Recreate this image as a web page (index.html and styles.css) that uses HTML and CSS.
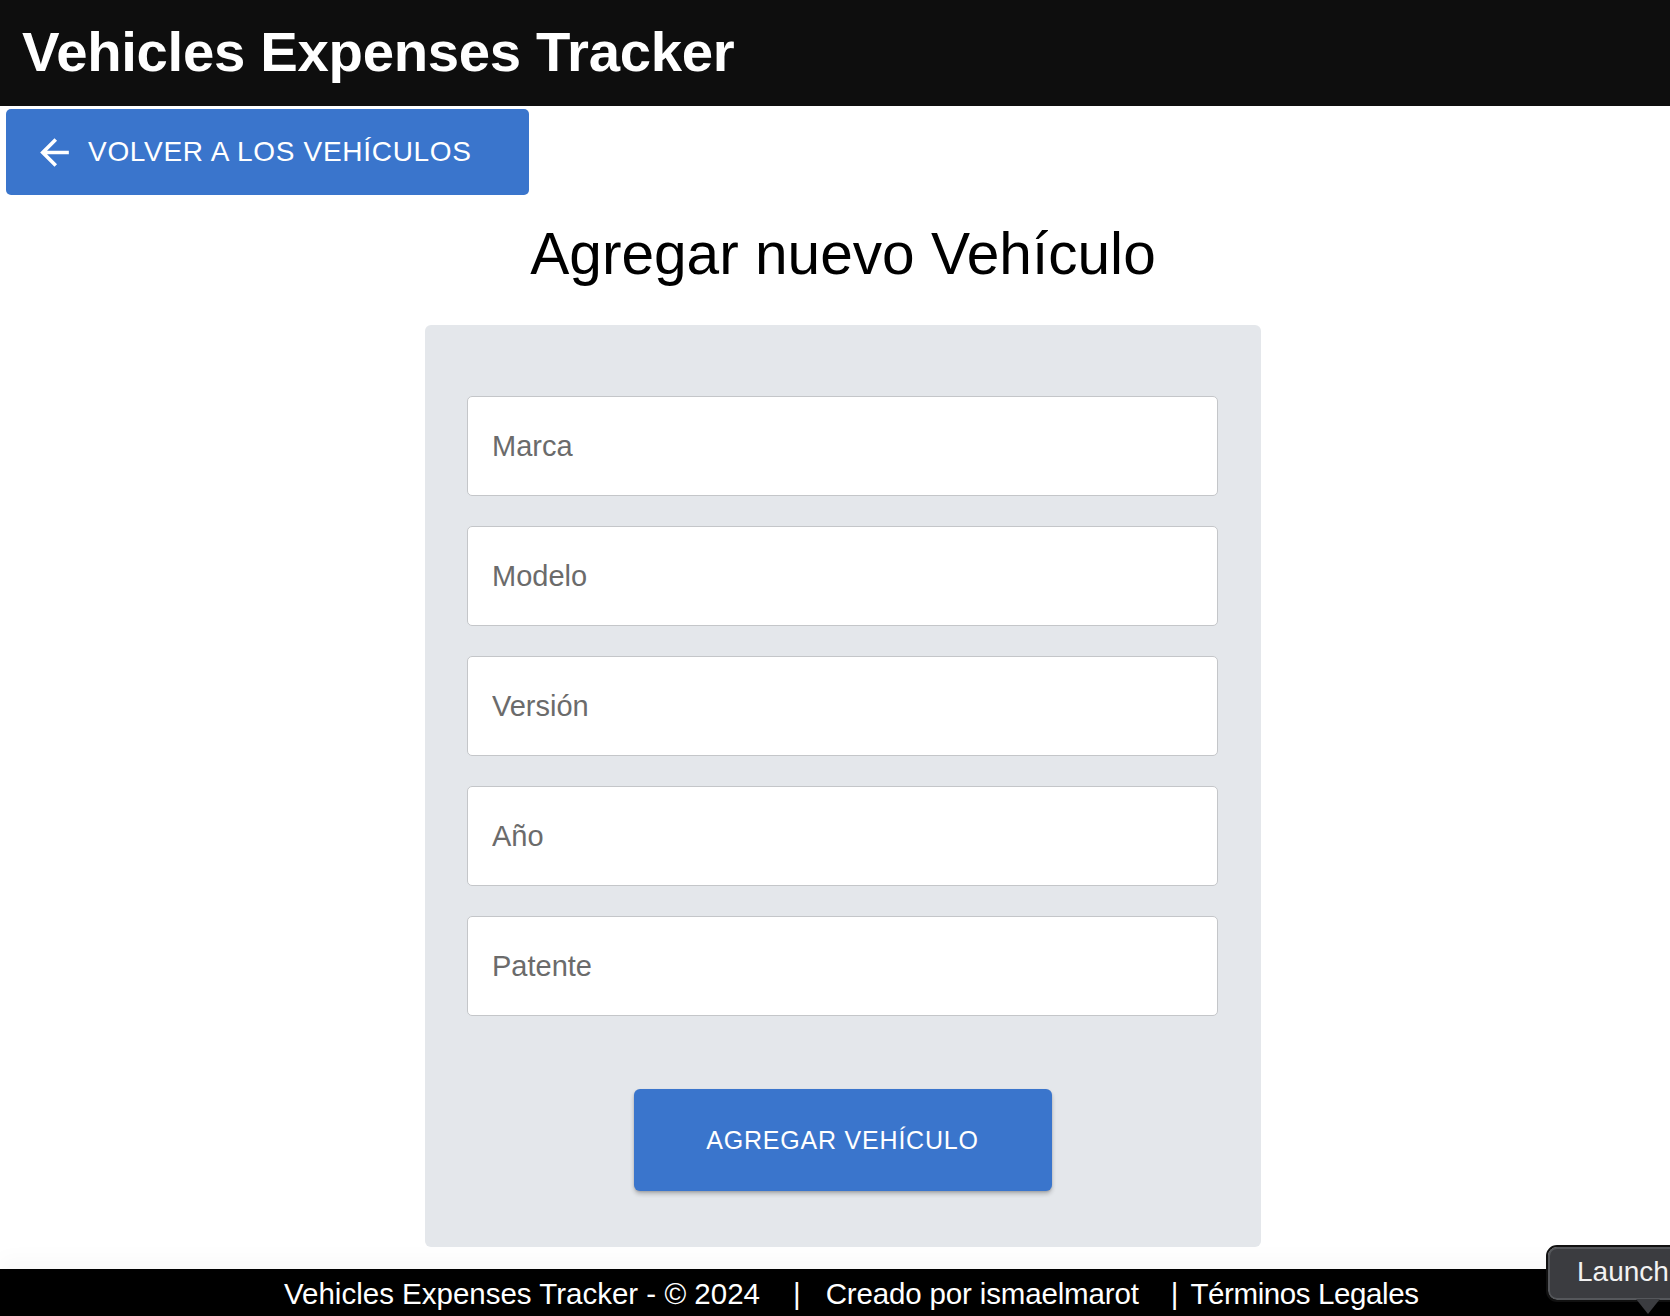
FILE: index.html
```html
<!DOCTYPE html>
<html lang="es">
<head>
<meta charset="utf-8">
<title>Vehicles Expenses Tracker</title>
<link rel="stylesheet" href="styles.css">
</head>
<body>
<header class="topbar">
  <h1 class="brand">Vehicles Expenses Tracker</h1>
</header>
<div class="back-row">
  <button class="back-btn" type="button">
    <svg class="back-icon" viewBox="0 0 24 24" aria-hidden="true"><path d="M20 11H7.83l5.59-5.59L12 4l-8 8 8 8 1.41-1.41L7.83 13H20v-2z"/></svg>
    <span>VOLVER A LOS VEHÍCULOS</span>
  </button>
</div>
<main class="main">
  <h2 class="page-title">Agregar nuevo Vehículo</h2>
  <form class="card">
    <input class="field" type="text" placeholder="Marca">
    <input class="field" type="text" placeholder="Modelo">
    <input class="field" type="text" placeholder="Versión">
    <input class="field" type="text" placeholder="Año">
    <input class="field" type="text" placeholder="Patente">
    <button class="submit-btn" type="button">AGREGAR VEHÍCULO</button>
  </form>
</main>
<footer class="footer">
  <span>Vehicles Expenses Tracker - © 2024</span>
  <span class="sep">|</span>
  <span class="credit">Creado por ismaelmarot</span>
  <span class="sep sep2">|</span>
  <span class="legal">Términos Legales</span>
  <div class="launch">Launch</div>
</footer>
</body>
</html>
```

FILE: styles.css
```css
* { box-sizing: border-box; }
html, body { margin: 0; padding: 0; }
body {
  font-family: "Liberation Sans", Arial, sans-serif;
  background: #ffffff;
  color: #000;
  width: 1670px;
  height: 1316px;
  overflow: hidden;
  display: flex;
  flex-direction: column;
}
.topbar {
  background: #0e0e0e;
  height: 106px;
  flex: none;
  display: flex;
  align-items: center;
  padding-left: 22px;
}
.brand {
  margin: 0;
  color: #fff;
  font-size: 56.3px;
  font-weight: 700;
  letter-spacing: -0.3px;
  line-height: 1;
  padding-bottom: 2px;
}
.back-row {
  padding: 3px 0 0 6px;
}
.back-btn {
  width: 523px;
  height: 86px;
  background: #3a75cc;
  border: none;
  border-radius: 5px;
  color: #fff;
  display: flex;
  align-items: center;
  padding: 0 0 0 27px;
  gap: 12px;
  font-family: "Liberation Sans", Arial, sans-serif;
  font-size: 28px;
  letter-spacing: 0.7px;
  cursor: pointer;
}
.back-icon {
  width: 43px;
  height: 43px;
  fill: #fff;
  flex: none;
}
.main {
  flex: 1;
  display: flex;
  flex-direction: column;
  align-items: center;
  padding-left: 16px;
}
.page-title {
  margin: 0;
  height: 130px;
  display: flex;
  align-items: center;
  padding-bottom: 14px;
  font-size: 58.6px;
  font-weight: 400;
  color: #000;
}
.card {
  width: 836px;
  background: #e4e7eb;
  border-radius: 6px;
  padding: 71px 43px 56px 42px;
  display: flex;
  flex-direction: column;
  gap: 30px;
}
.field {
  width: 100%;
  height: 100px;
  border: 1px solid #c4c6c9;
  border-radius: 5px;
  background: #fff;
  padding: 0 24px;
  font-family: "Liberation Sans", Arial, sans-serif;
  font-size: 29px;
  color: #222;
  outline: none;
}
.field::placeholder { color: #6b6b6b; }
.submit-btn {
  align-self: center;
  margin-top: 43px;
  width: 418px;
  height: 102px;
  background: #3a75cc;
  color: #fff;
  border: none;
  border-radius: 6px;
  font-family: "Liberation Sans", Arial, sans-serif;
  font-size: 25px;
  letter-spacing: 0.8px;
  box-shadow: 0 3px 4px rgba(0,0,0,0.22), 0 1px 2px rgba(0,0,0,0.12);
  cursor: pointer;
}
.footer {
  position: relative;
  flex: none;
  margin-top: 22px;
  height: 47px;
  background: #000;
  color: #fff;
  font-size: 29.5px;
  display: flex;
  align-items: center;
  padding-left: 284px;
  padding-top: 2px;
  box-shadow: 0 -12px 20px rgba(0,0,0,0.025);
}
.credit { letter-spacing: -0.15px; }
.legal { letter-spacing: -0.4px; }
.sep { margin: 0 25px 0 33px; }
.sep2 { margin: 0 12px 0 32px; }
.launch {
  position: absolute;
  left: 1548px;
  top: -22px;
  width: 140px;
  height: 53px;
  background: #3b3c40;
  border: 2px solid #55575b;
  outline: 2px solid #111;
  border-radius: 9px;
  color: #f2f2f2;
  font-size: 28px;
  padding: 7px 0 0 27px;
  white-space: nowrap;
}
.launch::after {
  content: "";
  position: absolute;
  left: 86px;
  bottom: -16px;
  border-left: 12px solid transparent;
  border-right: 12px solid transparent;
  border-top: 15px solid #3b3c40;
}
```
